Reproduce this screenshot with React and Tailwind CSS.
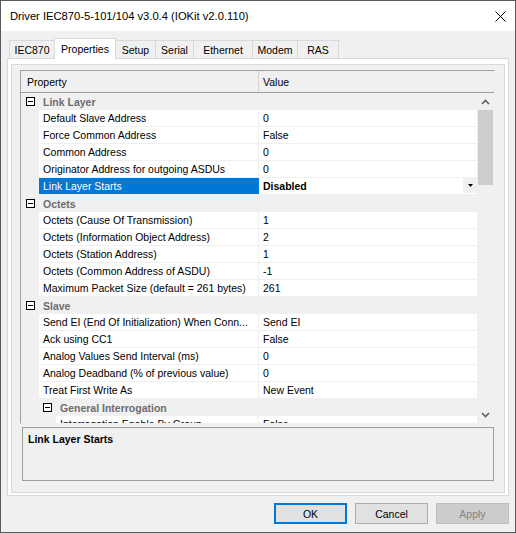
import React from 'react';

const rows = [
  { cat: true, label: 'Link Layer' },
  { label: 'Default Slave Address', value: '0' },
  { label: 'Force Common Address', value: 'False' },
  { label: 'Common Address', value: '0' },
  { label: 'Originator Address for outgoing ASDUs', value: '0' },
  { label: 'Link Layer Starts', value: 'Disabled', selected: true },
  { cat: true, label: 'Octets' },
  { label: 'Octets (Cause Of Transmission)', value: '1' },
  { label: 'Octets (Information Object Address)', value: '2' },
  { label: 'Octets (Station Address)', value: '1' },
  { label: 'Octets (Common Address of ASDU)', value: '-1' },
  { label: 'Maximum Packet Size (default = 261 bytes)', value: '261' },
  { cat: true, label: 'Slave' },
  { label: 'Send EI (End Of Initialization) When Conn...', value: 'Send EI' },
  { label: 'Ack using CC1', value: 'False' },
  { label: 'Analog Values Send Interval (ms)', value: '0' },
  { label: 'Analog Deadband (% of previous value)', value: '0' },
  { label: 'Treat First Write As', value: 'New Event' },
  { cat: true, label: 'General Interrogation', sub: true },
  { label: 'Interrogation Enable By Group', value: 'False', sub: true },
];

const tabs = [
  { label: 'IEC870', w: 'w-[45px]' },
  { label: 'Properties', w: 'w-[62px]', active: true },
  { label: 'Setup', w: 'w-[39px]' },
  { label: 'Serial', w: 'w-[38px]' },
  { label: 'Ethernet', w: 'w-[59px]' },
  { label: 'Modem', w: 'w-[45px]' },
  { label: 'RAS', w: 'w-[42px]' },
];

const MinusBox = () => (
  <div className="relative w-[9px] h-[9px] shrink-0 border border-black bg-white">
    <div className="absolute left-[1px] top-[3px] w-[5px] h-px bg-black" />
  </div>
);

const CategoryRow = ({ label, sub }) => (
  <div className={`flex items-center h-[17px] shrink-0 bg-[#f0f0f0] ${sub ? 'pl-[22px]' : 'pl-[5px]'}`}>
    <MinusBox />
    <span className="ml-[8px] font-bold text-[#6d6d6d]">{label}</span>
  </div>
);

const PropRow = ({ label, value, selected, sub }) => (
  <div className="flex h-[17px] shrink-0 border-b border-[#f0f0f0]">
    <div className={`${sub ? 'w-[35px]' : 'w-[18px]'} shrink-0 bg-[#f0f0f0]`} />
    <div
      className={`flex items-center ${sub ? 'w-[202px]' : 'w-[219px]'} shrink-0 pl-[4px] overflow-hidden whitespace-nowrap ${
        selected ? 'bg-[#0078d7] text-white' : 'bg-white text-black'
      }`}
    >
      {label}
    </div>
    <div className={`w-px shrink-0 ${selected ? 'bg-[#0078d7]' : 'bg-[#f0f0f0]'}`} />
    <div className="flex flex-1 justify-between bg-white pl-[4px] whitespace-nowrap overflow-hidden">
      <span className={`self-center ${selected ? 'font-bold' : ''}`}>{value}</span>
      {selected && (
        <div className="flex items-center justify-center w-[14px] h-[15px] bg-[#f0f0f0]">
          <svg width="5" height="3" viewBox="0 0 5 3">
            <polygon points="0,0 5,0 2.5,3" fill="#000" />
          </svg>
        </div>
      )}
    </div>
  </div>
);

const Chevron = ({ down }) => (
  <svg width="9" height="6" viewBox="0 0 9 6">
    <polyline
      points={down ? '1,1 4.5,4.5 8,1' : '1,5 4.5,1.5 8,5'}
      fill="none"
      stroke="#606060"
      strokeWidth="1.6"
    />
  </svg>
);

export default function App() {
  return (
    <div className="w-[516px] h-[533px] flex flex-col border border-[#5a5a5a] bg-[#f0f0f0] text-[10.5px] leading-[12px] text-black font-['Liberation_Sans',Arial,sans-serif]">
      {/* Title bar */}
      <div className="flex items-center justify-between h-[30px] shrink-0 bg-white pl-[9px] pr-[9px]">
        <span className="text-[11.2px]">Driver IEC870-5-101/104 v3.0.4 (IOKit v2.0.110)</span>
        <svg width="11" height="11" viewBox="0 0 11 11">
          <path d="M0.5 0.5 L10.5 10.5 M10.5 0.5 L0.5 10.5" stroke="#000" strokeWidth="1" />
        </svg>
      </div>

      {/* Tabs */}
      <div className="flex items-end h-[27px] shrink-0 pl-[8px]">
        {tabs.map((t, i) =>
          t.active ? (
            <div
              key={t.label}
              className={`relative z-10 -mb-px flex items-start justify-center h-[21px] ${t.w} pt-[4px] bg-white border-t border-l border-r border-[#d9d9d9]`}
            >
              {t.label}
            </div>
          ) : (
            <div
              key={t.label}
              className={`flex items-center justify-center h-[18px] ${t.w} bg-[#f0f0f0] border-t border-[#d9d9d9] ${
                i === 2 ? '' : 'border-l'
              } ${i === tabs.length - 1 ? 'border-r' : ''}`}
            >
              {t.label}
            </div>
          )
        )}
      </div>

      {/* Tab page */}
      <div className="ml-[6px] w-[502px] h-[438px] shrink-0 border border-[#d9d9d9] bg-white pt-[5px] pl-[3px]">
        <div className="w-[494px] h-[429px] border border-[#dadada] bg-[#f0f0f0] pl-[8px] pt-[5px]">
          {/* Property grid */}
          <div className="w-[477px] h-[413px] flex flex-col">
            <div className="w-[475px] h-[354px] border-t border-l border-[#a0a0a0] border-r border-b border-r-[#f0f0f0] border-b-[#f0f0f0] flex flex-col">
              <div className="flex h-[22px] shrink-0 border-b border-[#a0a0a0] bg-[#f0f0f0]">
                <div className="flex items-center w-[237px] pl-[6px]">Property</div>
                <div className="w-px bg-[#d5d5d5]" />
                <div className="flex items-center flex-1 pl-[4px]">Value</div>
              </div>
              <div className="flex h-[330px]">
                <div className="flex flex-col w-[456px] overflow-hidden">
                  {rows.map((r) =>
                    r.cat ? (
                      <CategoryRow key={r.label} label={r.label} sub={r.sub} />
                    ) : (
                      <PropRow key={r.label} {...r} />
                    )
                  )}
                </div>
                <div className="flex flex-col w-[17px] bg-[#f0f0f0]">
                  <div className="flex items-center justify-center h-[17px]">
                    <Chevron />
                  </div>
                  <div className="ml-px w-[15px] h-[75px] bg-[#cdcdcd]" />
                  <div className="flex-1" />
                  <div className="flex items-center justify-center h-[17px]">
                    <Chevron down />
                  </div>
                </div>
              </div>
            </div>
            {/* Help pane */}
            <div className="mt-[3px] ml-[2px] w-[472px] h-[54px] border border-[#a0a0a0] bg-[#f0f0f0] pl-[5px] pt-[5px]">
              <span className="font-bold">Link Layer Starts</span>
            </div>
          </div>
        </div>
      </div>

      {/* Buttons */}
      <div className="flex justify-end gap-[8px] mt-[7px] pr-[6px]">
        <button className="w-[73px] h-[21px] border-2 border-[#0078d7] bg-[#e1e1e1]">OK</button>
        <button className="w-[73px] h-[21px] border border-[#adadad] bg-[#e1e1e1]">Cancel</button>
        <button className="w-[73px] h-[21px] border border-[#bfbfbf] bg-[#cccccc] text-[#838383]">Apply</button>
      </div>
    </div>
  );
}
